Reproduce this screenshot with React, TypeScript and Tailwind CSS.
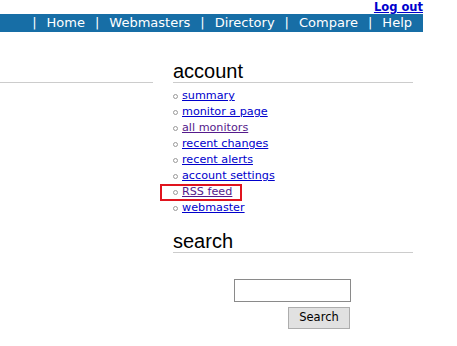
import React from 'react'

const NAV = ['Home', 'Webmasters', 'Directory', 'Compare', 'Help']

const LINKS = [
  { label: 'summary', visited: false },
  { label: 'monitor a page', visited: false },
  { label: 'all monitors', visited: true },
  { label: 'recent changes', visited: false },
  { label: 'recent alerts', visited: false },
  { label: 'account settings', visited: false },
  { label: 'RSS feed', visited: true, marked: true },
  { label: 'webmaster', visited: false },
]

const verdana = 'font-["DejaVu_Sans",Verdana,sans-serif]'

export default function App() {
  return (
    <div className="w-[457px] h-[346px] bg-white overflow-hidden relative">
      {/* top links */}
      <div className="w-[423px] h-[14px] flex justify-end items-end">
        <a
          href="#"
          className={`${verdana} text-[11.5px] leading-[14px] font-bold text-[#0000cc] underline`}
        >
          Log out
        </a>
      </div>

      {/* nav bar */}
      <div
        className={`w-[423px] h-[18px] bg-[#176ea6] flex justify-end items-center gap-[10px] pr-[11px] ${verdana} text-[13px] text-white`}
      >
        {NAV.map(n => (
          <React.Fragment key={n}>
            <span className="leading-[18px]">|</span>
            <a href="#" className="leading-[18px]">{n}</a>
          </React.Fragment>
        ))}
      </div>

      <div className="flex mt-[28px]">
        {/* left column */}
        <div className="w-[153px] h-[290px] flex flex-col justify-between">
          <div className="h-[23px] border-b border-[#cccccc]" />
          <div className="border-b border-[#eeeeee]" />
        </div>

        {/* right column */}
        <div className="ml-[20px] w-[240px]">
          <h2 className="font-['Liberation_Sans',Arial,sans-serif] text-[20px] leading-[22px] text-black border-b border-[#cccccc]">
            account
          </h2>
          <ul className="mt-[5px]">
            {LINKS.map(l => (
              <li key={l.label} className="relative flex items-center h-[16px]">
                <span className="w-[5px] h-[5px] rounded-full border border-[#999999] mr-[4px]" />
                <a
                  href="#"
                  className={`${verdana} text-[11.2px] leading-[16px] underline ${
                    l.visited ? 'text-[#551a8b]' : 'text-[#0000cc]'
                  }`}
                >
                  {l.label}
                </a>
                {l.marked && (
                  <span className="absolute left-[-13px] top-0 w-[82px] h-[17px] border-2 border-[#e0141e]" />
                )}
              </li>
            ))}
          </ul>

          <h2 className="mt-[14px] font-['Liberation_Sans',Arial,sans-serif] text-[20px] leading-[22px] text-black border-b border-[#cccccc]">
            search
          </h2>
          <form className="w-[117px] ml-[61px] mt-[26px] flex flex-col" onSubmit={e => e.preventDefault()}>
            <input type="text" className="w-[117px] h-[23px] border border-[#8a8a8a] bg-white" />
            <button
              type="submit"
              className={`self-end mr-[1px] mt-[5px] w-[62px] h-[22px] bg-[#e1e1e1] border border-[#adadad] ${verdana} text-[11.5px] text-black`}
            >
              Search
            </button>
          </form>
        </div>
      </div>
    </div>
  )
}
